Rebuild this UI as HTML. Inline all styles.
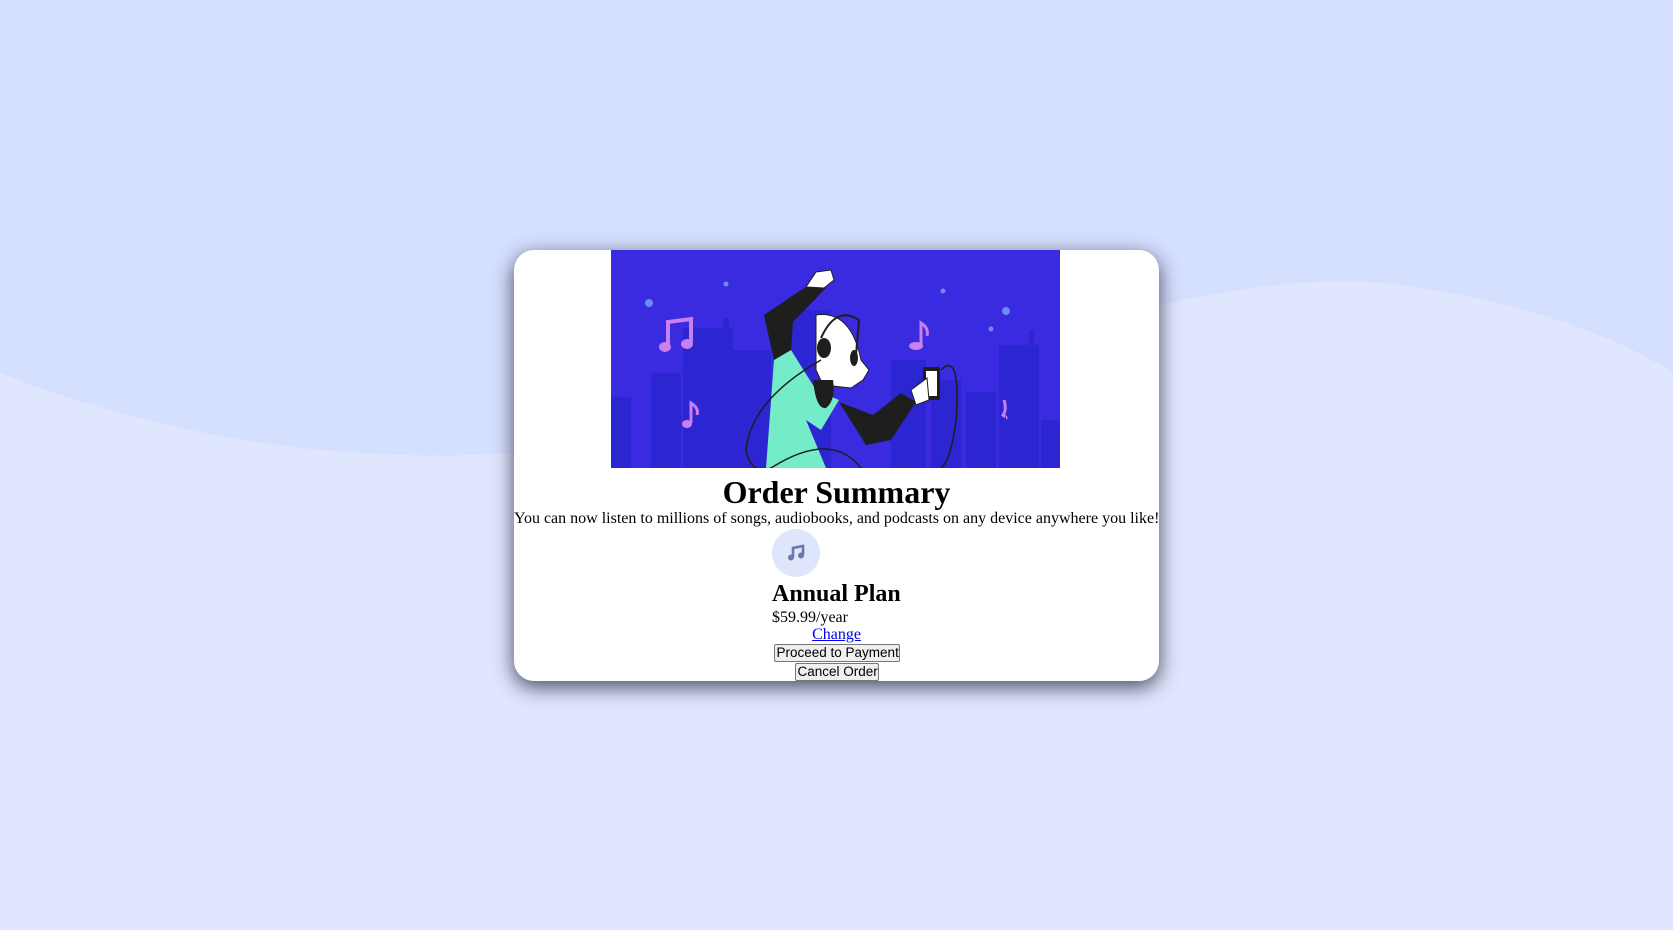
<!DOCTYPE html>
<html><head><meta charset="utf-8"><style>
html,body{margin:0;padding:0;width:1673px;height:930px;overflow:hidden;background:#d5dffe;font-family:"Liberation Serif",serif;}
#bg{position:absolute;left:0;top:0}
.card{position:absolute;left:514px;top:250px;width:645px;height:431px;background:#fff;border-radius:20px;box-shadow:0 6px 20px rgba(45,45,70,.85);overflow:hidden}
.a{position:absolute;white-space:nowrap}
h1{margin:0;font-size:32px;font-weight:bold}
button{font-family:"Liberation Sans",sans-serif;font-size:13.5px;padding:0 2px;background:#efefef;border:1px solid #767676;border-radius:2px;color:#000;height:18px;line-height:16px}
</style></head><body>
<svg id="bg" width="1673" height="930"><path d="M0 373 C250 470 500 480 800 410 C1050 330 1250 265 1400 285 C1550 305 1640 350 1673 373 L1673 930 L0 930 Z" fill="#dfe6fd"/></svg>
<div class="card">
<svg class="a" style="left:97px;top:0" width="449" height="218" viewBox="0 0 449 218">
<rect width="449" height="218" fill="#3a2ae0"/>
<g fill="#2b25d2">
<rect x="0" y="147" width="20" height="71"/><rect x="40" y="123" width="30" height="95"/><rect x="72" y="78" width="50" height="140"/><rect x="112" y="68" width="6" height="20"/><rect x="120" y="100" width="40" height="118"/><rect x="175" y="60" width="45" height="158"/><rect x="280" y="110" width="35" height="108"/><rect x="320" y="130" width="30" height="88"/><rect x="355" y="142" width="30" height="76"/><rect x="388" y="95" width="40" height="123"/><rect x="418" y="80" width="5" height="20"/><rect x="430" y="170" width="19" height="48"/>
</g>
<circle cx="38" cy="53" r="4" fill="#6a8cf5"/><circle cx="115" cy="34" r="2.5" fill="#6a8cf5"/><circle cx="332" cy="41" r="2.5" fill="#6a8cf5"/><circle cx="395" cy="61" r="4" fill="#6a8cf5"/><circle cx="380" cy="79" r="2.5" fill="#6a8cf5"/>
<g fill="#c97ff0"><path d="M57 95 L57 72 L80 69 L80 92" stroke="#c97ff0" stroke-width="4" fill="none"/><ellipse cx="54" cy="97" rx="6" ry="5"/><ellipse cx="76" cy="94" rx="6" ry="5"/>
<path d="M310 95 L310 73 Q318 78 316 86" stroke="#c97ff0" stroke-width="3" fill="none"/><ellipse cx="305" cy="96" rx="7" ry="4"/>
<path d="M80 173 L80 153 Q88 158 86 165" stroke="#c97ff0" stroke-width="3" fill="none"/><ellipse cx="76" cy="174" rx="5" ry="4"/>
<path d="M393 150 Q396 160 392 165 Q396 168 395 168" stroke="#c97ff0" stroke-width="3" fill="none"/></g>
<path d="M155 218 L163 110 L180 100 L205 140 L228 150 L210 180 L195 170 L215 218 Z" fill="#74ecc8"/>
<path d="M163 110 L153 65 L190 40 L210 30 L215 38 L182 72 L180 100 Z" fill="#1e1e1e"/>
<path d="M195 37 L205 22 L220 20 L223 30 L213 38 Z" fill="#fff" stroke="#1e1e1e"/>
<path d="M205 65 Q240 60 250 110 L258 120 L252 130 L240 138 L212 135 L205 120 Z" fill="#fff" stroke="#1e1e1e"/>
<path d="M202 130 Q205 160 215 158 Q225 150 222 130 Z" fill="#1e1e1e"/>
<ellipse cx="213" cy="98" rx="7" ry="10" fill="#1e1e1e"/><ellipse cx="243" cy="108" rx="4" ry="8" fill="#1e1e1e"/>
<path d="M210 88 Q225 55 248 70 L245 105" stroke="#1e1e1e" stroke-width="2" fill="none"/>
<path d="M228 152 L262 165 L290 143 L305 152 L280 190 L255 195 Z" fill="#1e1e1e"/>
<rect x="312" y="117" width="17" height="33" rx="2" fill="#1e1e1e"/><rect x="315" y="121" width="11" height="25" fill="#fff"/>
<path d="M300 140 L316 128 L318 150 L305 155 Z" fill="#fff" stroke="#1e1e1e"/>
<path d="M210 110 Q140 150 135 200 Q140 225 160 218 M160 218 Q220 180 250 218 M330 120 Q350 100 345 170 Q340 210 330 218" stroke="#1e1e1e" stroke-width="1.5" fill="none"/>
</svg>
<h1 class="a" style="left:0;width:645px;text-align:center;top:224px">Order Summary</h1>
<div class="a" style="left:0;width:645px;text-align:center;top:260px;font-size:16px">You can now listen to millions of songs, audiobooks, and podcasts on any device anywhere you like!</div>
<div class="a" style="left:258px;top:279px;width:48px;height:48px;border-radius:50%;background:#dfe6fc"></div>
<svg class="a" style="left:272px;top:293px" width="20" height="20" viewBox="0 0 20 20"><path d="M7 14 V5 L17 3 V12" stroke="#6c79a8" stroke-width="2.6" fill="none"/><circle cx="5" cy="14.5" r="3" fill="#6c79a8"/><circle cx="15" cy="12.5" r="3" fill="#6c79a8"/></svg>
<div class="a" style="left:258px;top:331px;font-size:24px;font-weight:bold">Annual Plan</div>
<div class="a" style="left:258px;top:359px;font-size:16px">$59.99/year</div>
<div class="a" style="left:0;width:645px;text-align:center;top:376px;font-size:16px"><a href="#" style="color:#0000ee">Change</a></div>
<div class="a" style="left:0;width:645px;text-align:center;top:394px"><button style="width:126px">Proceed to Payment</button></div>
<div class="a" style="left:0;width:645px;text-align:center;top:413px"><button style="width:84px">Cancel Order</button></div>
</div>
</body></html>
